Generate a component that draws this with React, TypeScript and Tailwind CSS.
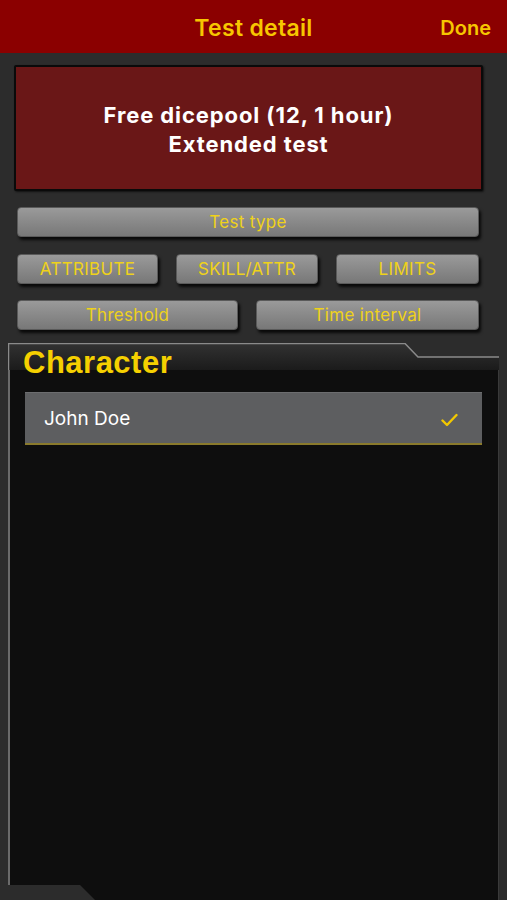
import React from 'react'

const font = { fontFamily: 'Inter, "Liberation Sans", sans-serif' }

function GrayButton({ label, className }: { label: string; className: string }) {
  return (
    <div
      className={`h-[30px] rounded-[4px] flex items-center justify-center pt-[2px] text-[17px] tracking-[0.3px] text-[#efd21a] bg-gradient-to-b from-[#9a9a9a] to-[#787878] border border-[#5a5a5a] shadow-[2px_3px_3px_rgba(0,0,0,0.8)] ${className}`}
    >
      {label}
    </div>
  )
}

export default function App() {
  return (
    <div className="w-[507px] h-[900px] bg-[#2c2c2c] flex flex-col overflow-hidden" style={font}>
      {/* nav bar */}
      <div className="relative h-[53px] shrink-0 bg-[#8b0000] flex items-center justify-center pt-[3px]">
        <span className="text-[23px] tracking-[0.3px] font-semibold text-[#f7c600]">Test detail</span>
        <span className="absolute right-[16px] top-[13px] text-[20px] font-semibold text-[#f7c600]">Done</span>
      </div>

      {/* summary */}
      <div className="mt-[12px] ml-[14px] w-[469px] h-[126px] shrink-0 border-2 border-[#0a0a0a] rounded-[2px] bg-[#6a1717] flex flex-col items-center justify-center pt-[4px] text-white text-[22px] tracking-[0.9px] font-bold leading-[29px] shadow-[1px_1px_2px_rgba(0,0,0,0.6)]">
        <span>Free dicepool (12, 1 hour)</span>
        <span>Extended test</span>
      </div>

      {/* options */}
      <GrayButton label="Test type" className="mt-[16px] ml-[17px] w-[462px] shrink-0" />
      <div className="mt-[17px] ml-[17px] flex gap-[18px] shrink-0">
        <GrayButton label="ATTRIBUTE" className="w-[141px]" />
        <GrayButton label="SKILL/ATTR" className="w-[142px]" />
        <GrayButton label="LIMITS" className="w-[143px]" />
      </div>
      <div className="mt-[16px] ml-[17px] flex gap-[18px] shrink-0">
        <GrayButton label="Threshold" className="w-[221px]" />
        <GrayButton label="Time interval" className="w-[223px]" />
      </div>

      {/* character panel */}
      <div className="relative mt-[13px] ml-[8px] w-[491px] flex-1 flex flex-col">
        <div className="relative h-[27px] shrink-0">
          <svg className="absolute inset-0" width="491" height="27" viewBox="0 0 491 27">
            <defs>
              <linearGradient id="hdr" x1="0" y1="0" x2="0" y2="1">
                <stop offset="0" stopColor="#323232" />
                <stop offset="1" stopColor="#1b1b1b" />
              </linearGradient>
            </defs>
            <path d="M0 0 H397 L410 14 H491 V27 H0 Z" fill="url(#hdr)" />
            <path d="M0.5 27 V0.5 H397 L410 14 H491" fill="none" stroke="#8a8a8a" strokeWidth="1.5" />
          </svg>
          <span
            className="absolute left-[15px] top-[3px] text-[31px] tracking-[0.5px] font-bold leading-[34px] text-[#f5d000] z-10"
            style={{ fontFamily: '"Liberation Sans", Arial, sans-serif' }}
          >
            Character
          </span>
        </div>
        <div className="relative flex-1 bg-[#0e0e0e] border-l-2 border-[#6a6a6a] border-r border-r-[#3a3a3a]">
          <div className="mt-[22px] ml-[15px] w-[457px] h-[53px] bg-[#5d5e60] border-t border-[#6c6d6f] border-b-2 border-b-[#8a7a2c] flex items-center justify-between pt-[3px] pl-[19px] pr-[24px]">
            <span className="text-[19px] text-white">John Doe</span>
            <svg width="17" height="14" viewBox="0 0 17 14">
              <path d="M1.5 7.5 L6 12 L15.5 2" fill="none" stroke="#f2c800" strokeWidth="2.4" strokeLinecap="round" strokeLinejoin="round" />
            </svg>
          </div>
          <svg className="absolute left-[-2px] bottom-0" width="100" height="15" viewBox="0 0 100 15">
            <path d="M0 0 H72 L87 15 H0 Z" fill="#2c2c2c" />
          </svg>
        </div>
      </div>
    </div>
  )
}
